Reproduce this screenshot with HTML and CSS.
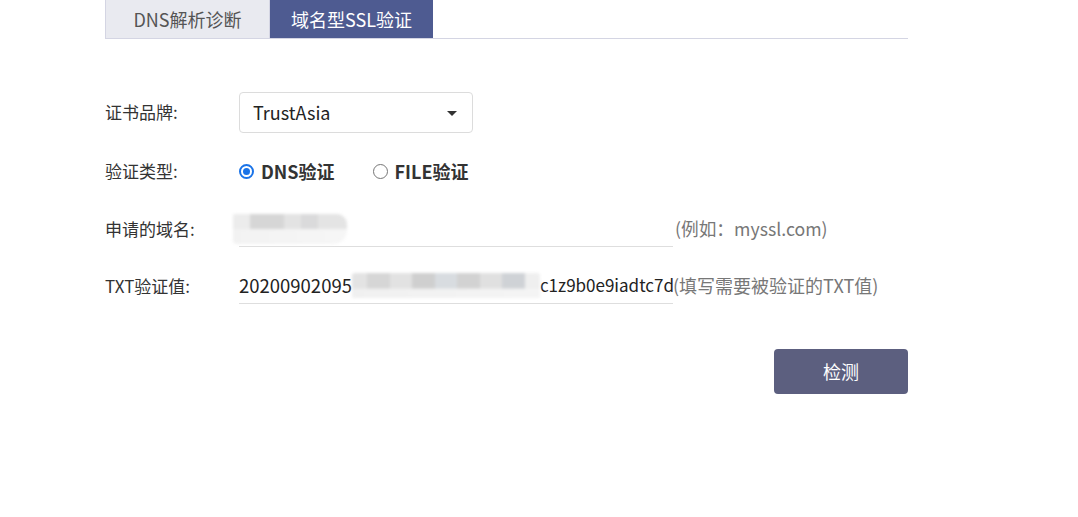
FILE: index.html
```html
<!DOCTYPE html>
<html lang="zh-CN">
<head>
<meta charset="utf-8">
<link rel="stylesheet" href="styles.css">
</head>
<body>
<div class="page">
  <div class="tabs">
    <div class="tab">DNS解析诊断</div>
    <div class="tab active">域名型SSL验证</div>
  </div>
  <div class="form">
    <div class="row row-brand">
      <div class="label">证书品牌:</div>
      <div class="select">
        <span>TrustAsia</span>
        <span class="caret"></span>
      </div>
    </div>
    <div class="row row-type">
      <div class="label">验证类型:</div>
      <div class="radios">
        <label class="radio"><span class="dot checked"></span><b>DNS验证</b></label>
        <label class="radio"><span class="dot"></span><b>FILE验证</b></label>
      </div>
    </div>
    <div class="row row-domain">
      <div class="label">申请的域名:</div>
      <div class="input"><span class="mosaic mosaic-a"></span></div>
      <div class="hint">(例如：myssl.com)</div>
    </div>
    <div class="row row-txt">
      <div class="label">TXT验证值:</div>
      <div class="input"><span class="val val-a">20200902095</span><span class="mosaic mosaic-b"></span><span class="val">c1z9b0e9iadtc7d</span></div>
      <div class="hint hint-tight">(填写需要被验证的TXT值)</div>
    </div>
    <div class="actions">
      <button class="btn">检测</button>
    </div>
  </div>
</div>
</body>
</html>
```

FILE: styles.css
```css
* { box-sizing: border-box; }
html, body { margin: 0; padding: 0; background: #fff; }
body {
  font-family: "Noto Sans CJK SC", "Microsoft YaHei", sans-serif;
  color: #333;
  font-size: 17px;
}
.page {
  width: 803px;
  margin-left: 105px;
}
.tabs {
  display: flex;
  height: 39px;
  border-bottom: 1px solid #d4d5e3;
}
.tab {
  width: 165px;
  height: 38px;
  display: flex;
  align-items: center;
  justify-content: center;
  background: #e9eaf0;
  border-left: 1px solid #d4d5e3;
  border-right: 1px solid #d4d5e3;
  color: #555;
  font-size: 18px;
  padding-bottom: 1px;
}
.tab.active {
  width: 163px;
  background: #4e5b91;
  border-color: #4e5b91;
  color: #fff;
}
.form {
  padding-top: 53px;
}
.row {
  display: flex;
  align-items: center;
}
.label {
  width: 134px;
  flex: none;
  color: #333;
  font-size: 17px;
  margin-top: -2px;
}
.row-brand { height: 41px; margin-bottom: 20px; }
.row-type { height: 36px; margin-bottom: 22px; }
.row-domain { height: 36px; margin-bottom: 21px; }
.row-txt { height: 36px; }
.select {
  width: 234px;
  height: 41px;
  border: 1px solid #dcdcdc;
  border-radius: 4px;
  display: flex;
  align-items: center;
  justify-content: space-between;
  padding: 0 15px 2px 13px;
  font-size: 18px;
  color: #222;
}
.caret {
  width: 0; height: 0;
  border-left: 5px solid transparent;
  border-right: 5px solid transparent;
  border-top: 5px solid #333;
  margin-top: 3px;
}
.radios { display: flex; align-items: center; }
.radio {
  display: flex;
  align-items: center;
  margin-right: 38px;
  font-size: 18px;
  color: #333;
}
.radio b { font-weight: 700; margin-top: -1px; }
.dot {
  width: 15px; height: 15px;
  border: 1px solid #767676;
  border-radius: 50%;
  margin-right: 7px;
  position: relative;
  flex: none;
}
.dot.checked {
  border: 2px solid #1a73e8;
}
.dot.checked::after {
  content: "";
  position: absolute;
  left: 2px; top: 2px;
  width: 7px; height: 7px;
  border-radius: 50%;
  background: #1a73e8;
}
.input {
  width: 434px;
  height: 36px;
  border-bottom: 1px solid #dedede;
  display: flex;
  align-items: center;
  font-size: 17px;
  color: #222;
  white-space: nowrap;
  overflow: visible;
}
.val { flex: none; margin-top: -2px; }
.val-a { font-size: 18.5px; }
.hint {
  color: #777;
  font-size: 17.7px;
  margin-left: 2px;
  margin-top: -2px;
  white-space: nowrap;
}
.hint-tight { margin-left: 0; font-size: 18px; }
.mosaic {
  display: inline-block;
  flex: none;
  filter: blur(1.5px);
}
.mosaic-a {
  width: 114px;
  height: 30px;
  margin-left: -6px;
  background:
    linear-gradient(90deg, #ececec 0 15%, #d6d6d6 15% 45%, #e3e3e3 45% 60%, #dadadb 60% 75%, #e4e4e4 75% 100%) top / 100% 50% no-repeat,
    linear-gradient(90deg, #f2f2f2, #f6f6f6) bottom / 100% 50% no-repeat;
  border-radius: 2px 10px 14px 4px;
}
.mosaic-b {
  width: 188px;
  height: 26px;
  background:
    linear-gradient(90deg, #e3e3e3 0 8%, #d6d6d6 8% 20%, #e2e2e2 20% 32%, #cfcfcf 32% 44%, #d8dce0 44% 56%, #d2d2d2 56% 68%, #e0e0e0 68% 80%, #cfd2d6 80% 92%, #efefef 92% 100%) top / 100% 60% no-repeat,
    linear-gradient(90deg, #f0f0f0, #f4f4f4) bottom / 100% 40% no-repeat;
  border-radius: 3px;
}
.actions {
  display: flex;
  justify-content: flex-end;
  margin-top: 45px;
}
.btn {
  width: 134px;
  height: 45px;
  border: none;
  border-radius: 4px;
  background: #5c5f7f;
  color: #fff;
  font-family: inherit;
  font-size: 18px;
  padding-bottom: 2px;
}
```
